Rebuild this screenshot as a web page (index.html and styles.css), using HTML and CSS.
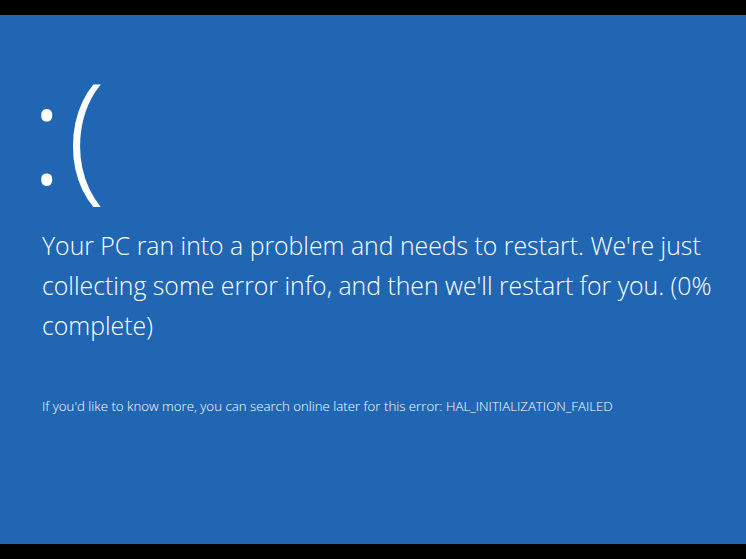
FILE: index.html
```html
<!DOCTYPE html>
<html lang="en">
<head>
    <meta charset="UTF-8">
    <meta name="viewport" content="width=device-width, initial-scale=1.0">
    <title>Your PC ran into a problem</title>
    <link rel="stylesheet" href="styles.css">
</head>
<body>
    <div class="screen">
        <div class="face">:(</div>
        <p class="message">Your PC ran into a problem and needs to restart. We're just collecting some error info, and then we'll restart for you. (0% complete)</p>
        <p class="details">If you'd like to know more, you can search online later for this error: HAL_INITIALIZATION_FAILED</p>
    </div>
</body>
</html>
```

FILE: styles.css
```css
body {
    margin: 0;
    padding: 15px 0;
    background-color: #000;
    font-family: 'Open Sans', 'Noto Sans', sans-serif;
    color: #fff;
}
.screen {
    background-color: #2166b3;
    height: 529px;
    box-sizing: border-box;
    padding: 46px 20px 0 42px;
}
.face {
    margin-left: -12px;
    font-size: 140px;
    font-weight: 300;
    line-height: 140px;
    letter-spacing: 4px;
}
.message {
    margin: 24px 0 0;
    max-width: 690px;
    font-size: 24.8px;
    font-weight: 300;
    line-height: 40px;
}
.details {
    margin: 52px 0 0;
    font-size: 13.25px;
    font-weight: 300;
}
```
